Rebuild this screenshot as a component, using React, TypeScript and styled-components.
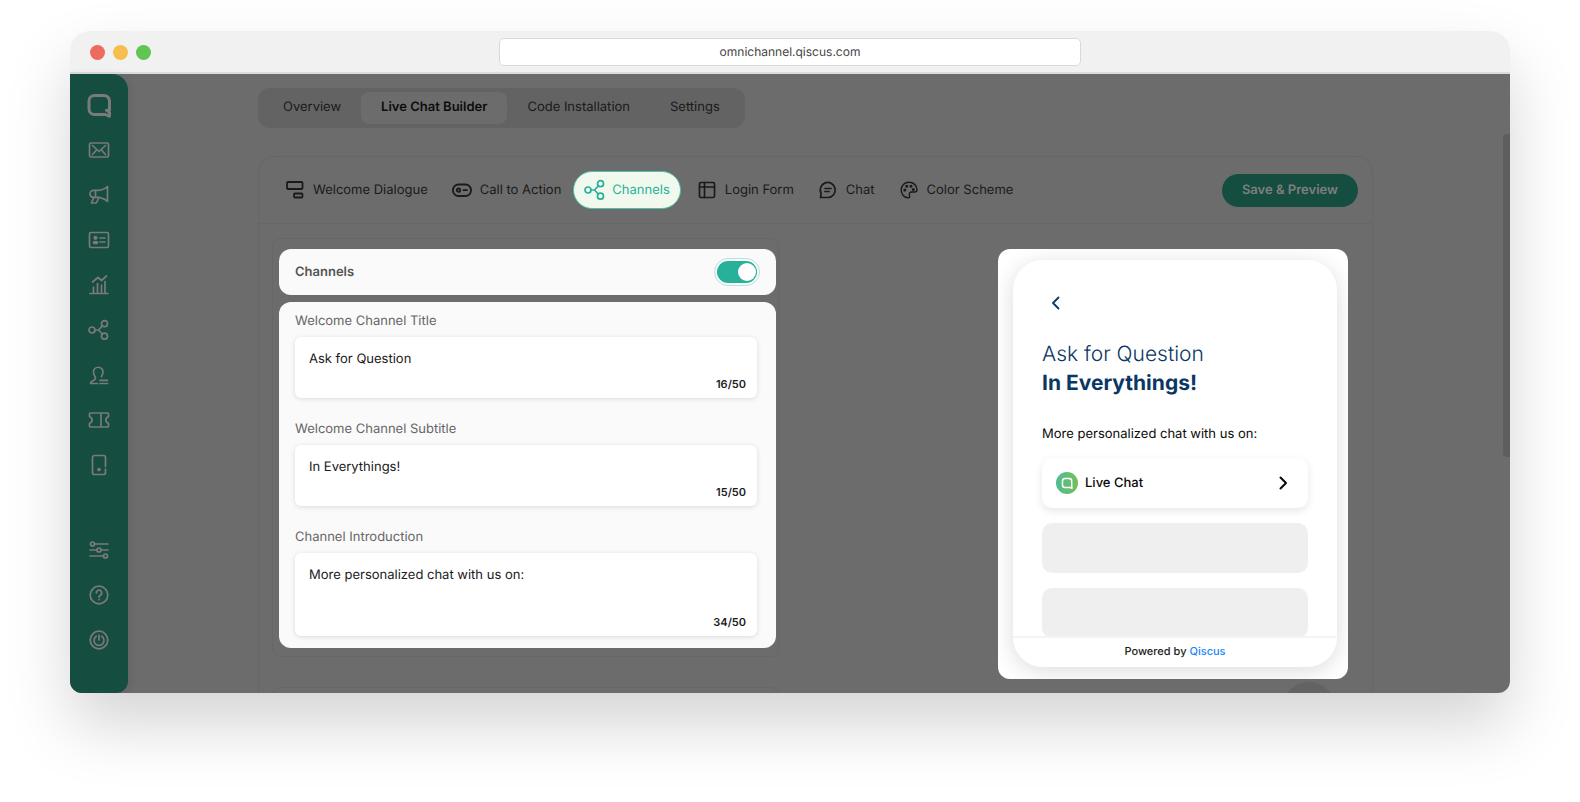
import React, { useState } from "react";
import styled, { createGlobalStyle, css } from "styled-components";

const GlobalStyle = createGlobalStyle`
  *, *::before, *::after { box-sizing: border-box; }
  body {
    margin: 0;
    background: #ffffff;
    font-family: Inter, "Liberation Sans", sans-serif;
    text-rendering: geometricPrecision;
    color: #1a1a1a;
  }
  button, input, textarea { font: inherit; color: inherit; text-rendering: inherit; }
`;

const dim = "#6c6c6c";
const dimLine = "#676767";
const dimGreen = "#164d41";
const green = "#27b199";

const Page = styled.div`
  display: flex;
  height: 100vh;
  padding: 31px 70px 109px;
`;

const BrowserWindow = styled.div`
  flex: 1;
  display: flex;
  flex-direction: column;
  min-width: 0;
  border-radius: 20px 20px 12px 12px;
  overflow: hidden;
  box-shadow: 0 32px 64px rgba(0, 0, 0, 0.17);
`;

const TitleBar = styled.header`
  flex: none;
  display: grid;
  grid-template-columns: 1fr minmax(200px, 582px) 1fr;
  align-items: center;
  height: 43px;
  padding: 1px 20px 0;
  background: #f1f1f1;
  border-bottom: 2px solid #dcdcdc;
`;

const Dots = styled.div`
  display: flex;
  gap: 8px;
`;

const Dot = styled.span<{ $color: string }>`
  width: 15px;
  height: 15px;
  border-radius: 50%;
  background: ${(p) => p.$color};
`;

const Address = styled.input`
  width: 100%;
  height: 28px;
  padding: 0 8px 1px;
  border: 1px solid #d9d9d9;
  border-radius: 5px;
  background: #ffffff;
  text-align: center;
  font-size: 12px;
  color: #444444;
  outline: none;
`;

const Body = styled.div`
  flex: 1;
  display: flex;
  min-height: 0;
  background: ${dim};
`;

const Sidebar = styled.nav`
  flex: none;
  display: flex;
  flex-direction: column;
  justify-content: space-between;
  align-items: center;
  width: 58px;
  padding: 16px 0 38px;
  border-radius: 0 16px 12px 0;
  background: ${dimGreen};
  box-shadow: 2px 0 8px rgba(0, 0, 0, 0.08);
`;

const NavGroup = styled.div`
  display: flex;
  flex-direction: column;
  gap: 15px;
`;

const NavLink = styled.a`
  display: flex;
  align-items: center;
  justify-content: center;
  width: 30px;
  height: 30px;
  color: #7a7a7a;
`;

const Main = styled.main`
  flex: 1;
  min-width: 0;
  padding: 14px 0 0 130px;
  overflow: hidden;
`;

const Scroller = styled.div`
  flex: none;
  width: 7px;
  padding-top: 60px;
`;

const Thumb = styled.div`
  height: 323px;
  border-radius: 4px 0 0 4px;
  background: #5e5e5e;
`;

const Tabs = styled.div`
  display: inline-flex;
  padding: 4px 5px;
  border-radius: 12px;
  background: #636363;
`;

const Tab = styled.button<{ $active?: boolean }>`
  height: 32px;
  padding: 0 20px 2px;
  border: 0;
  border-radius: 8px;
  background: ${(p) => (p.$active ? dim : "transparent")};
  font-size: 13px;
  font-weight: ${(p) => (p.$active ? 600 : 400)};
  color: ${(p) => (p.$active ? "#0c0c0c" : "#1a1a1a")};
`;

const Panel = styled.section`
  margin: 28px 130px 0 0;
  border: 1px solid ${dimLine};
  border-bottom: 0;
  border-radius: 16px 16px 0 0;
`;

const PanelHeader = styled.div`
  display: flex;
  align-items: center;
  justify-content: space-between;
  height: 67px;
  padding: 0 14px;
  border-bottom: 1px solid ${dimLine};
`;

const Steps = styled.div`
  display: flex;
  align-items: center;
`;

const Step = styled.button<{ $active?: boolean }>`
  display: flex;
  align-items: center;
  gap: 8px;
  height: 38px;
  padding: 0 11px;
  border: 1px solid transparent;
  border-radius: 19px;
  background: transparent;
  font-size: 13px;
  color: #1a1a1a;
  ${(p) =>
    p.$active &&
    css`
      margin-right: 4px;
      padding: 0 10px;
      gap: 6px;
      border-color: #4fc0ab;
      background: #f1f9ee;
      color: ${green};
    `}
`;

const SaveButton = styled.button`
  height: 33px;
  padding: 0 20px 1px;
  border: 0;
  border-radius: 17px;
  background: ${dimGreen};
  font-size: 13px;
  font-weight: 600;
  color: #7f7f7f;
`;

const Columns = styled.div`
  display: flex;
  justify-content: space-between;
  align-items: flex-start;
  padding: 14px 24px 0 13px;
`;

const Settings = styled.div`
  display: flex;
  flex-direction: column;
  gap: 30px;
  width: 507px;
`;

const Group = styled.div`
  display: flex;
  flex-direction: column;
  gap: 7px;
  min-height: 60px;
  padding: 10px 2px 8px 6px;
  border: 1px solid ${dimLine};
  border-radius: 8px;
`;

const Card = styled.div`
  border-radius: 12px;
  background: #fafafa;
`;

const ToggleCard = styled(Card)`
  display: flex;
  align-items: center;
  justify-content: space-between;
  height: 46px;
  padding: 0 19px 1px 16px;
  font-size: 13px;
  font-weight: 600;
  color: #555555;
`;

const Toggle = styled.input`
  appearance: none;
  display: flex;
  align-items: center;
  justify-content: flex-end;
  width: 40px;
  height: 22px;
  margin: 0;
  padding: 0 1px;
  border-radius: 11px;
  background: ${green};
  outline: 1px solid #b5e3da;
  outline-offset: 2px;
  &::before {
    content: "";
    width: 18px;
    height: 18px;
    border-radius: 50%;
    background: #ffffff;
  }
  &:not(:checked) {
    justify-content: flex-start;
    background: #bbbbbb;
  }
`;

const FieldsCard = styled(Card)`
  display: flex;
  flex-direction: column;
  gap: 20px;
  padding: 8px 19px 12px 16px;
`;

const Field = styled.div`
  display: flex;
  flex-direction: column;
`;

const FieldLabel = styled.label`
  height: 27px;
  line-height: 23px;
  font-size: 13px;
  color: #666666;
`;

const FieldBox = styled.div<{ $tall?: boolean }>`
  display: flex;
  flex-direction: column;
  height: ${(p) => (p.$tall ? 83 : 61)}px;
  padding: 12px 11px 5px 14px;
  border-radius: 6px;
  background: #ffffff;
  box-shadow: 0 1px 5px rgba(0, 0, 0, 0.13);
`;

const FieldInput = styled.textarea`
  flex: 1;
  min-height: 0;
  padding: 0;
  border: 0;
  outline: 0;
  resize: none;
  overflow: hidden;
  background: transparent;
  font-size: 13px;
  line-height: 20px;
`;

const Counter = styled.span`
  align-self: flex-end;
  font-size: 11px;
  line-height: 18px;
  font-weight: 600;
`;

const PreviewColumn = styled.div`
  display: flex;
  flex-direction: column;
  align-items: flex-end;
  gap: 3px;
  padding-top: 11px;
`;

const PreviewCard = styled.div`
  width: 350px;
  padding: 11px 11px 12px 15px;
  border-radius: 12px;
  background: #ffffff;
  overflow: hidden;
`;

const Launcher = styled.div`
  width: 54px;
  height: 54px;
  margin-right: 12px;
  border-radius: 50%;
  background: #636363;
`;

const Phone = styled.div`
  display: flex;
  flex-direction: column;
  height: 407px;
  border-radius: 30px;
  background: #ffffff;
  box-shadow: 0 4px 22px rgba(0, 0, 0, 0.14);
  overflow: hidden;
`;

const PhoneBody = styled.div`
  flex: 1;
  display: flex;
  flex-direction: column;
  min-height: 0;
  padding: 31px 29px 0 29px;
`;

const BackButton = styled.button`
  align-self: flex-start;
  display: flex;
  padding: 3px 5px;
  border: 0;
  background: transparent;
  color: #0a3763;
`;

const Heading = styled.h2`
  margin: 25px 0 0;
  font-size: 21px;
  line-height: 29px;
  font-weight: 300;
  color: #0a3763;
  strong {
    display: block;
    font-weight: 700;
  }
`;

const Intro = styled.p`
  margin: 26px 0 14px;
  font-size: 13px;
  line-height: 20px;
  color: #0a0a0a;
`;

const ChannelButton = styled.button`
  flex: none;
  display: flex;
  align-items: center;
  gap: 7px;
  height: 50px;
  padding: 0 17px 1px 14px;
  border: 0;
  border-radius: 10px;
  background: #ffffff;
  box-shadow: 0 3px 8px rgba(0, 0, 0, 0.1);
  font-size: 13px;
  font-weight: 500;
  color: #0a0a0a;
  span {
    flex: 1;
    text-align: left;
  }
`;

const Placeholder = styled.div`
  flex: none;
  height: 50px;
  margin-top: 15px;
  border-radius: 10px;
  background: #efefef;
`;

const PhoneFooter = styled.footer`
  flex: none;
  display: flex;
  justify-content: center;
  gap: 3px;
  height: 31px;
  border-top: 2px solid #f4f4f4;
  background: #ffffff;
  font-size: 11px;
  font-weight: 500;
  line-height: 27px;
  a {
    color: #1a86fb;
    text-decoration: none;
  }
`;

interface SvgProps {
  size?: number;
  sw?: number;
  box?: number;
  min?: number;
  children: React.ReactNode;
}

const Svg = ({ size = 22, sw = 1.7, box = 22, min = 0, children }: SvgProps) => (
  <svg width={size} height={size} viewBox={`${min} ${min} ${box} ${box}`} fill="none" stroke="currentColor" strokeWidth={sw} strokeLinecap="round" strokeLinejoin="round" aria-hidden="true">
    {children}
  </svg>
);

const shareShape = (
  <>
    <circle cx="4" cy="11" r="3" />
    <circle cx="16.500" cy="4.700" r="3" />
    <circle cx="16.500" cy="17.200" r="3" />
    <path d="M7 11h3.500l3.700-4M10.500 11l3.700 4" />
  </>
);

const navTop: { label: string; icon: React.ReactNode }[] = [
  {
    label: "Home",
    icon: (
      <Svg size={26} box={26} sw={3}>
        <path d="M19.500 22.500H8.500a5.500 5.500 0 0 1-5.500-5.500v-8a5.500 5.500 0 0 1 5.500-5.500h9.500a5.500 5.500 0 0 1 5.500 5.500V18l-3 .3 3 2v4l-4-1.800" />
      </Svg>
    ),
  },
  {
    label: "Inbox",
    icon: (
      <Svg>
        <rect x="1.500" y="4" width="19" height="14" rx="1.500" />
        <path d="M4.500 6.500l6.500 6 6.500-6M4.500 15.500l4-4.500M17.500 15.500l-4-4.500" />
      </Svg>
    ),
  },
  {
    label: "Broadcast",
    icon: (
      <Svg>
        <path d="M19.500 2.500v15c-3-2.800-6-4-9.500-4.200H5.500a3.500 3.500 0 0 1 0-7H10c3.500-.2 6.500-1 9.500-3.800zM7.500 6.500v6.500M5.800 13.500L3.500 19h4.800l2.700-5.500" />
      </Svg>
    ),
  },
  {
    label: "Contacts",
    icon: (
      <Svg>
        <rect x="1.500" y="3.500" width="19" height="15" rx="1.500" />
        <circle cx="7.500" cy="8.800" r="1.300" fill="currentColor" />
        <ellipse cx="7.500" cy="13.500" rx="2" ry="1" fill="currentColor" />
        <path d="M12 9h5M12 13h5" />
      </Svg>
    ),
  },
  {
    label: "Analytics",
    icon: (
      <Svg>
        <path d="M2 19.500h18M5.500 19v-6M9.500 19V9.500M13.500 19v-8M17 19V7.500M4.500 8L10 3.500l3.500 3L18.500 2" />
      </Svg>
    ),
  },
  { label: "Integration", icon: <Svg>{shareShape}</Svg> },
  {
    label: "Agents",
    icon: (
      <Svg>
        <path d="M9.500 19.500h-7c0-3 5-2.500 5-5.500 0-1.300-2-2.500-2-6a4.700 4.700 0 0 1 9.500 0c0 2-1 3.300-1.500 4.500M12 16.300h7.500M12 19.500h7.500" />
      </Svg>
    ),
  },
  {
    label: "Tickets",
    icon: (
      <Svg>
        <path d="M2.500 4h17a1 1 0 0 1 1 1v2.700c-3.500 1-3.500 5.600 0 6.600V17a1 1 0 0 1-1 1h-17a1 1 0 0 1-1-1v-2.700c3.500-1 3.500-5.600 0-6.600V5a1 1 0 0 1 1-1zM13 4v14" />
      </Svg>
    ),
  },
  {
    label: "Devices",
    icon: (
      <Svg>
        <path d="M17.500 12.500V3.500a2 2 0 0 0-2-2h-9a2 2 0 0 0-2 2v15a2 2 0 0 0 2 2h9a2 2 0 0 0 2-2v-3.500" />
        <circle cx="11" cy="15.500" r="1" fill="currentColor" />
      </Svg>
    ),
  },
];

const navBottom: { label: string; icon: React.ReactNode }[] = [
  {
    label: "Settings",
    icon: (
      <Svg>
        <circle cx="4.500" cy="5" r="2" />
        <circle cx="11" cy="11" r="2" />
        <circle cx="17.500" cy="17" r="2" />
        <path d="M6.500 5H20M2 11h7M13 11h7M2 17h13.500" />
      </Svg>
    ),
  },
  {
    label: "Help",
    icon: (
      <Svg>
        <circle cx="11" cy="11" r="8.800" />
        <path d="M8.300 9a2.700 2.700 0 1 1 4 2.300c-1 .6-1.300 1-1.300 2M11 15.600v.1" />
      </Svg>
    ),
  },
  {
    label: "Log out",
    icon: (
      <Svg>
        <circle cx="11" cy="11" r="8.800" />
        <path d="M8.300 7.200a5 5 0 1 0 5.400 0M11 6v5" />
      </Svg>
    ),
  },
];

const steps: { label: string; active?: boolean; icon: React.ReactNode }[] = [
  {
    label: "Welcome Dialogue",
    icon: (
      <Svg size={20} box={20} sw={1.8}>
        <rect x="2" y="2" width="15.500" height="7" rx="1" />
        <rect x="9" y="13.500" width="8.500" height="4" rx="1" />
      </Svg>
    ),
  },
  {
    label: "Call to Action",
    icon: (
      <Svg size={20} box={20} sw={1.8}>
        <rect x="1" y="4.500" width="18" height="11.500" rx="5.500" />
        <circle cx="6.500" cy="10.200" r="1.700" />
        <path d="M11.500 10.200h3.500" />
      </Svg>
    ),
  },
  { label: "Channels", active: true, icon: <Svg>{shareShape}</Svg> },
  {
    label: "Login Form",
    icon: (
      <Svg size={20} box={20} min={-1}>
        <rect x="1.500" y="1.500" width="15" height="15" rx="1.500" />
        <path d="M1.500 6h15M6.500 1.500v15" />
      </Svg>
    ),
  },
  {
    label: "Chat",
    icon: (
      <Svg size={20} box={20} min={-1}>
        <path d="M1.500 16.500l.6-4A7.500 7.500 0 1 1 9 16.500zM6 7.500h6M6 10.500h4" />
      </Svg>
    ),
  },
  {
    label: "Color Scheme",
    icon: (
      <Svg size={20} box={20} min={-1} sw={1.400}>
        <path d="M9 1.200C4.500 1.200 1.200 4.700 1.200 9S4.500 16.800 8 16.800c1.800 0 2-1 1.500-2.300-.7-2 .2-3.500 2.200-3.500h3c1.500 0 2.300-.8 2.300-2.300C17 4.500 13.500 1.200 9 1.200z" />
        <circle cx="4.800" cy="9" r=".8" fill="currentColor" />
        <circle cx="6.800" cy="5.300" r=".8" fill="currentColor" />
        <circle cx="11" cy="5.300" r=".8" fill="currentColor" />
        <circle cx="13.300" cy="8.500" r=".8" fill="currentColor" />
      </Svg>
    ),
  },
];

const tabs = ["Overview", "Live Chat Builder", "Code Installation", "Settings"];

const LiveChatLogo = () => (
  <svg width="22" height="22" viewBox="0 0 22 22" fill="none" aria-hidden="true">
    <defs>
      <linearGradient id="logo" x1="0" y1="0" x2="1" y2="0">
        <stop offset="0" stopColor="#4fbb94" />
        <stop offset="1" stopColor="#74c05a" />
      </linearGradient>
    </defs>
    <circle cx="11" cy="11" r="11" fill="url(#logo)" />
    <path d="M16 16.300l-1.500-.8H9A2.500 2.500 0 0 1 6.500 13V9A2.500 2.500 0 0 1 9 6.500h4.200A2.500 2.500 0 0 1 15.700 9v4.500z" stroke="#ffffff" strokeWidth="1.500" strokeLinejoin="round" />
  </svg>
);

interface FieldData {
  id: string;
  label: string;
  value: string;
  count: string;
  tall?: boolean;
}

const fields: FieldData[] = [
  { id: "title", label: "Welcome Channel Title", value: "Ask for Question", count: "16/50" },
  { id: "subtitle", label: "Welcome Channel Subtitle", value: "In Everythings!", count: "15/50" },
  { id: "intro", label: "Channel Introduction", value: "More personalized chat with us on:", count: "34/50", tall: true },
];

export default function App() {
  const [enabled, setEnabled] = useState(true);
  return (
    <>
      <GlobalStyle />
      <Page>
        <BrowserWindow>
          <TitleBar>
            <Dots>
              <Dot $color="#ed6a5e" />
              <Dot $color="#f5be4f" />
              <Dot $color="#61c554" />
            </Dots>
            <Address aria-label="Address" defaultValue="omnichannel.qiscus.com" />
          </TitleBar>
          <Body>
            <Sidebar>
              <NavGroup>
                {navTop.map((n) => (
                  <NavLink key={n.label} href="#" aria-label={n.label}>{n.icon}</NavLink>
                ))}
              </NavGroup>
              <NavGroup>
                {navBottom.map((n) => (
                  <NavLink key={n.label} href="#" aria-label={n.label}>{n.icon}</NavLink>
                ))}
              </NavGroup>
            </Sidebar>
            <Main>
              <Tabs>
                {tabs.map((t, i) => (
                  <Tab key={t} $active={i === 1}>{t}</Tab>
                ))}
              </Tabs>
              <Panel>
                <PanelHeader>
                  <Steps>
                    {steps.map((s) => (
                      <Step key={s.label} $active={s.active}>
                        {s.icon}
                        {s.label}
                      </Step>
                    ))}
                  </Steps>
                  <SaveButton>Save &amp; Preview</SaveButton>
                </PanelHeader>
                <Columns>
                  <Settings>
                    <Group>
                      <ToggleCard>
                        <label htmlFor="channels">Channels</label>
                        <Toggle id="channels" type="checkbox" checked={enabled} onChange={(e) => setEnabled(e.target.checked)} />
                      </ToggleCard>
                      <FieldsCard>
                        {fields.map((f) => (
                          <Field key={f.id}>
                            <FieldLabel htmlFor={f.id}>{f.label}</FieldLabel>
                            <FieldBox $tall={f.tall}>
                              <FieldInput id={f.id} rows={1} defaultValue={f.value} />
                              <Counter>{f.count}</Counter>
                            </FieldBox>
                          </Field>
                        ))}
                      </FieldsCard>
                    </Group>
                    <Group />
                  </Settings>
                  <PreviewColumn>
                    <PreviewCard>
                      <Phone>
                        <PhoneBody>
                          <BackButton aria-label="Back">
                            <Svg size={18} box={18} sw={1.800}>
                              <path d="M11.500 3.500L6 9l5.500 5.500" />
                            </Svg>
                          </BackButton>
                          <Heading>
                            Ask for Question
                            <strong>In Everythings!</strong>
                          </Heading>
                          <Intro>More personalized chat with us on:</Intro>
                          <ChannelButton>
                            <LiveChatLogo />
                            <span>Live Chat</span>
                            <Svg size={16} box={16} sw={2}>
                              <path d="M5.500 2.500L11 8l-5.500 5.500" />
                            </Svg>
                          </ChannelButton>
                          <Placeholder />
                          <Placeholder />
                        </PhoneBody>
                        <PhoneFooter>
                          Powered by <a href="#">Qiscus</a>
                        </PhoneFooter>
                      </Phone>
                    </PreviewCard>
                    <Launcher />
                  </PreviewColumn>
                </Columns>
              </Panel>
            </Main>
            <Scroller>
              <Thumb />
            </Scroller>
          </Body>
        </BrowserWindow>
      </Page>
    </>
  );
}
